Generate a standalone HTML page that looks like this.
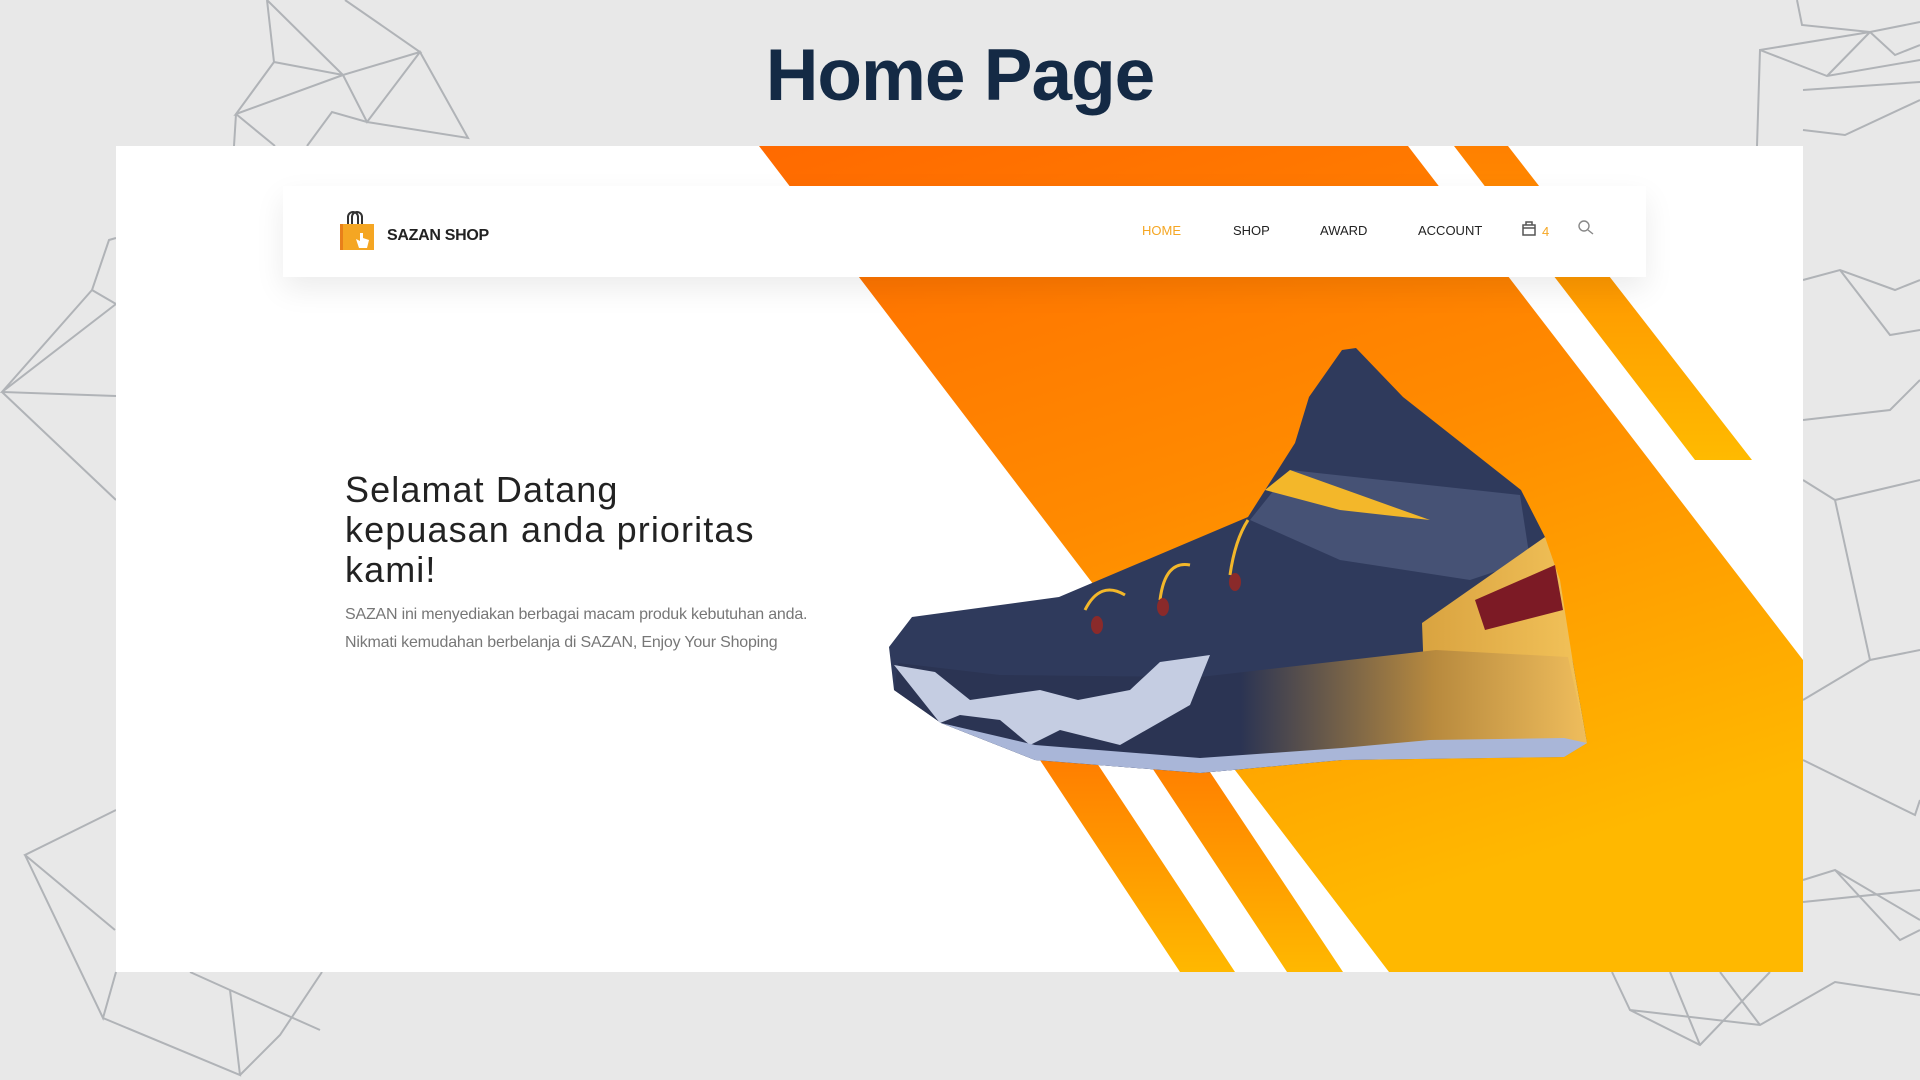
<!DOCTYPE html>
<html><head><meta charset="utf-8"><style>
html,body{margin:0;padding:0}
body{width:1920px;height:1080px;background:#e8e8e8;position:relative;overflow:hidden;font-family:"Liberation Sans",sans-serif}
.title{position:absolute;left:0;width:1920px;top:34px;text-align:center;font-size:73px;font-weight:bold;color:#142a45;letter-spacing:-1px}
.card{position:absolute;left:116px;top:146px;width:1687px;height:826px;background:#fff;overflow:hidden}
.nav{position:absolute;left:167px;top:40px;width:1363px;height:91px;background:#fff;box-shadow:0 12px 30px rgba(0,0,0,0.08)}
.brand{position:absolute;left:104px;top:41px;font-size:16px;font-weight:bold;color:#222;letter-spacing:-0.3px}
.menu{position:absolute;top:37px;font-size:13px;color:#222}
.h{position:absolute;left:229px;top:324px;font-size:36px;line-height:40px;color:#222;letter-spacing:1.1px}
.p{position:absolute;left:229px;top:455px;font-size:16px;line-height:28px;color:#777;letter-spacing:-0.2px}
</style></head><body>
<svg width="1920" height="1080" style="position:absolute;left:0;top:0" fill="none" stroke="#b0b3b7" stroke-width="2">
<path d="M267 0L274 62L343 75L420 52L345 0M267 0L343 75L367 122L420 52L468 138L367 122L332 112L307 146M274 62L236 114L343 75M236 114L234 146M236 114L275 146"/>
<path d="M116 238L109 240L92 290L116 304M92 290L2 392L116 396M2 392L116 304M2 392L116 500"/>
<path d="M116 810L25 855L115 930M25 855L103 1018L116 972M103 1018L240 1075L230 990L190 972M240 1075L280 1035L322 972M230 990L320 1030"/>
<path d="M1797 0L1802 25L1870 32L1920 22M1870 32L1760 50L1757 146M1870 32L1895 55L1920 45M1760 50L1827 76L1920 60M1827 76L1870 32M1803 90L1920 82M1803 130L1845 135L1920 100"/>
<path d="M1803 280L1840 270L1895 290L1920 280M1840 270L1890 335L1920 330M1803 420L1890 410L1920 380M1803 480L1835 500L1920 480M1835 500L1870 660L1803 700M1870 660L1920 650M1803 760L1915 815L1920 800M1803 880L1835 870L1900 940L1920 930M1835 870L1920 920M1803 902L1920 890"/>
<path d="M1612 972L1630 1010L1700 1045L1770 972M1630 1010L1760 1025L1835 982L1920 995M1700 1045L1670 972M1760 1025L1720 972"/>
</svg>
<div class="title">Home Page</div>
<div class="card">
<svg width="1687" height="826" style="position:absolute;left:0;top:0">
<defs>
<linearGradient id="g" x1="0" y1="0" x2="0.4" y2="1"><stop offset="0" stop-color="#ff6a00"/><stop offset="0.5" stop-color="#ff8a00"/><stop offset="1" stop-color="#ffb800"/></linearGradient>
<linearGradient id="g2" x1="0" y1="0" x2="0" y2="1"><stop offset="0" stop-color="#ff7a00"/><stop offset="1" stop-color="#ffb800"/></linearGradient>
<linearGradient id="g3" x1="0" y1="0" x2="0" y2="1"><stop offset="0" stop-color="#ff8000"/><stop offset="1" stop-color="#ffba00"/></linearGradient>
</defs>
<g transform="translate(-116,-146)">
<polygon fill="url(#g)" points="759,146 1408,146 1803,660 1803,972 1389,972"/>
<polygon fill="url(#g3)" points="1454,146 1508,146 1752,460 1695,460"/>
<polygon fill="url(#g2)" points="1030,745 1085,745 1235,972 1180,972"/>
<polygon fill="url(#g2)" points="1137,745 1192,745 1343,972 1287,972"/>
</g>
</svg>
<svg width="1687" height="826" style="position:absolute;left:0;top:0">
<defs>
<linearGradient id="gold" x1="0" y1="0" x2="1" y2="0"><stop offset="0" stop-color="#d9a340"/><stop offset="1" stop-color="#f3c35a"/></linearGradient>
<linearGradient id="mid" x1="0" y1="0" x2="1" y2="0"><stop offset="0" stop-color="#2b3453"/><stop offset="0.5" stop-color="#2b3453"/><stop offset="0.78" stop-color="#b88a3e"/><stop offset="1" stop-color="#efbd5c"/></linearGradient>
</defs>
<g transform="translate(-116,-146)">
<path fill="#2f3a5c" d="M889 647L912 617L1059 597L1248 517L1295 443L1309 397L1342 350L1356 348L1403 397L1521 490L1545 537L1573 663L1587 743L1564 757L1342 760L1200 773L1035 760L941 723L894 690Z"/>
<path fill="#465275" d="M1250 520L1290 470L1520 495L1530 560L1470 580L1340 560Z"/>
<path fill="#f3b72a" d="M1265 490L1290 470L1360 495L1430 520L1340 510Z"/>
<path fill="url(#gold)" d="M1422 623L1545 537L1560 580L1573 663L1587 743L1564 757L1427 757Z"/>
<path fill="#7c1a25" d="M1475 600L1555 565L1563 610L1485 630Z"/>
<path fill="url(#mid)" d="M898 663L1000 675L1200 677L1436 650L1568 657L1587 743L1564 757L1342 760L1200 773L1035 760L941 723L894 690Z"/>
<path fill="#c5cde2" d="M894 665L935 672L970 700L1040 690L1078 700L1130 690L1160 662L1210 655L1190 705L1120 745L1060 730L1030 745L1000 720L960 715L940 723Z"/>
<path fill="#a9b6d8" d="M941 723L1035 745L1200 758L1342 748L1430 740L1564 738L1587 743L1564 757L1342 760L1200 773L1035 760Z"/>
<g fill="none" stroke="#f3b72a" stroke-width="3"><path d="M1085 610Q1100 580 1125 595"/><path d="M1160 600Q1165 560 1190 565"/><path d="M1230 575Q1235 540 1248 520"/></g>
<g fill="#8a2a2a"><ellipse cx="1097" cy="625" rx="6" ry="9"/><ellipse cx="1163" cy="607" rx="6" ry="9"/><ellipse cx="1235" cy="582" rx="6" ry="9"/></g>
</g>
</svg>
<div class="nav">
<svg style="position:absolute;left:55px;top:25px" width="38" height="40" viewBox="0 0 38 40">
<path d="M10 14V6a5 5 0 0 1 10 0v8M14 14V6a5 5 0 0 1 10 0v8" fill="none" stroke="#333" stroke-width="2"/>
<rect x="2" y="13" width="34" height="26" fill="#f5a623"/><rect x="2" y="13" width="3" height="26" fill="#e8801a"/>
<path d="M22 22v8l-4-2 3 9h8l2-8-6-2v-5z" fill="#fff"/>
</svg>
<div class="brand">SAZAN SHOP</div>
<div class="menu" style="left:859px;color:#f5a623">HOME</div>
<div class="menu" style="left:950px">SHOP</div>
<div class="menu" style="left:1037px">AWARD</div>
<div class="menu" style="left:1135px">ACCOUNT</div>
<svg style="position:absolute;left:1238px;top:34px" width="16" height="16" viewBox="0 0 16 16" fill="none" stroke="#555" stroke-width="1.5"><rect x="2" y="5" width="12" height="10"/><path d="M5 5V2h6v3M2 8h12"/></svg>
<div class="menu" style="left:1259px;color:#f5a623;top:38px">4</div>
<svg style="position:absolute;left:1294px;top:33px" width="18" height="18" viewBox="0 0 18 18" fill="none" stroke="#888" stroke-width="1.4"><circle cx="7" cy="7" r="5"/><path d="M11 11l5 4"/></svg>
</div>
<div class="h">Selamat Datang<br>kepuasan anda prioritas<br>kami!</div>
<div class="p">SAZAN ini menyediakan berbagai macam produk kebutuhan anda.<br>Nikmati kemudahan berbelanja di SAZAN, Enjoy Your Shoping</div>
</div>
</body></html>
